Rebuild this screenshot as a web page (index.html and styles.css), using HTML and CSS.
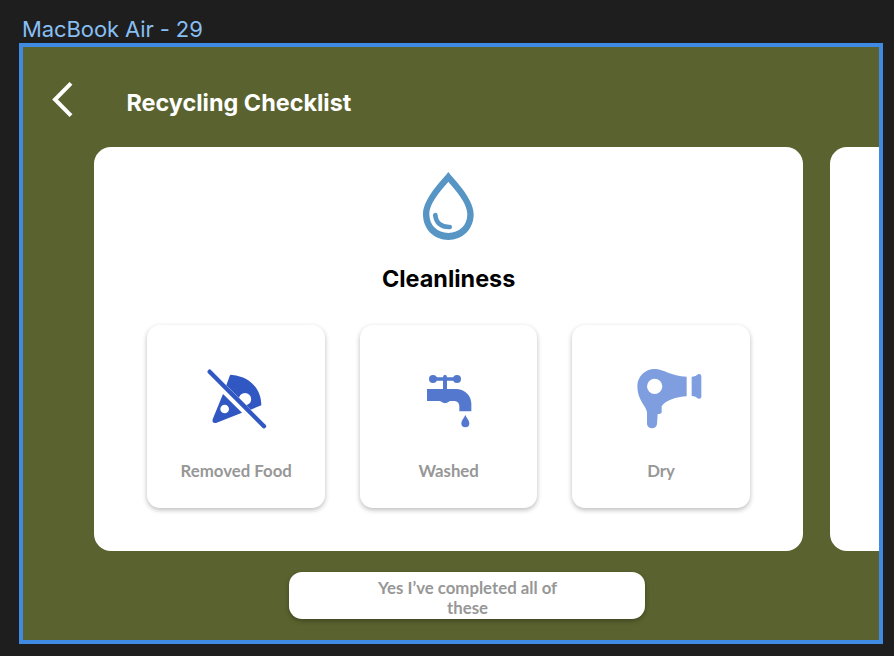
FILE: index.html
```html
<!DOCTYPE html>
<html lang="en">
<head>
<meta charset="utf-8">
<title>Recycling Checklist</title>
<link rel="stylesheet" href="styles.css">
</head>
<body>
<div class="frame-name">MacBook Air - 29</div>
<main class="frame">
  <header class="header">
    <svg class="back" width="24" height="40" viewBox="0 0 24 40"><path d="M20 3.3 4 19.5 20 35.7" fill="none" stroke="#fff" stroke-width="4"/></svg>
    <h1 class="title">Recycling Checklist</h1>
  </header>
  <div class="carousel">
    <section class="card">
      <svg class="drop" width="100" height="90" viewBox="0 0 300 270">
        <path fill="#5795c5" fill-rule="evenodd" d="M145 36C154 50 221 112 221 163C221 208 188 240 145 240S69 208 69 163C69 112 136 50 145 36ZM145 65C132 82 88 125 88 163C88 197 113 219 145 219S202 197 202 163C202 125 158 82 145 65Z"/>
        <path d="M106 165C107 188 124 202 149 201" fill="none" stroke="#5795c5" stroke-width="14" stroke-linecap="round"/>
      </svg>
      <h2 class="subject">Cleanliness</h2>
      <div class="tiles">
        <div class="tile">
          <svg width="90" height="85" viewBox="2 0 270 255">
            <g fill="#3157c3">
              <path fill-rule="evenodd" d="M108 91 118 63Q120 58 126 60C178 65 213 101 213 151L181 164ZM164 114A18.5 18.5 0 1 0 164 151A18.5 18.5 0 1 0 164 114Z"/>
              <path fill-rule="evenodd" d="M98 117 155 173 77 204Q64 206 67 193ZM103 149A13 13 0 1 0 103 175A13 13 0 1 0 103 149Z"/>
            </g>
            <path d="M58 50 221 214" stroke="#3157c3" stroke-width="13" stroke-linecap="round"/>
          </svg>
          <span>Removed Food</span>
        </div>
        <div class="tile">
          <svg width="90" height="85" viewBox="-19 -15 270 255">
            <g fill="#5378cd">
              <circle cx="68" cy="57" r="12"/><circle cx="140" cy="57" r="12"/>
              <path d="M68 52H98Q98 44 104 44T110 52H140V62H110V87H140C166 89 182 108 183 130V154H147V138Q146 125 133 123H119Q104 136 89 123H50V87H98V62H68Z"/>
              <path d="M165 165C169 174 177 182 177 190A12 12 0 0 1 153 190C153 182 161 174 165 165Z"/>
            </g>
          </svg>
          <span>Washed</span>
        </div>
        <div class="tile">
          <svg width="90" height="85" viewBox="-28 0 270 255">
            <g fill="#7f9ee0">
              <path fill-rule="evenodd" d="M88 42C116 42 136 64 184 65V124C154 125 119 137 109 154V171Q109 177 97 177L95 207C94 224 66 224 65 207V172C62 151 36 136 36 94C36 65 59 42 88 42ZM88 71A23 23 0 1 0 88 117A23 23 0 1 0 88 71Z"/>
              <path d="M199 65Q210 66 219 57Q228 56 228 64V125Q228 132 219 131Q210 122 199 123Z"/>
            </g>
          </svg>
          <span>Dry</span>
        </div>
      </div>
    </section>
    <section class="card"></section>
  </div>
  <button class="done"><span>Yes I’ve completed all of these</span></button>
</main>
</body>
</html>
```
FILE: styles.css
```css
* { box-sizing: border-box; }
body {
  margin: 0;
  height: 656px;
  overflow: hidden;
  background: #1e1e1e;
  font-family: Inter, sans-serif;
}
.frame-name {
  height: 42.5px;
  padding: 15px 0 0 22px;
  font-size: 22px;
  line-height: 28px;
  letter-spacing: -0.1px;
  color: #88bff2;
}
.frame {
  width: 863.5px;
  height: 601.5px;
  margin-left: 19px;
  border: 4px solid #3f8ae2;
  background: #5a632f;
  overflow: hidden;
}
.header {
  display: flex;
  height: 100.9px;
  padding: 33.5px 0 0 28px;
}
.title {
  margin: 8px 0 0 51.5px;
  font-size: 23.4px;
  line-height: 30px;
  font-weight: 700;
  color: #fff;
}
.carousel {
  display: flex;
  gap: 26.8px;
  padding-left: 71.4px;
}
.card {
  flex: none;
  width: 708.5px;
  height: 403.5px;
  padding: 12.6px 53px 0;
  border-radius: 17px;
  background: #fff;
}
.drop {
  display: block;
  margin-left: 252.6px;
}
.subject {
  margin: 14px 0 0;
  font-size: 23.4px;
  line-height: 30px;
  font-weight: 700;
  text-align: center;
  color: #000;
}
.tiles {
  display: flex;
  justify-content: space-between;
  margin-top: 31.5px;
}
.tile {
  display: flex;
  flex-direction: column;
  align-items: center;
  width: 177.7px;
  height: 182.5px;
  padding-top: 29.5px;
  border-radius: 13px;
  background: #fff;
  box-shadow: 0 2px 5px rgba(0, 0, 0, 0.27);
  font: 700 16.8px/20px Lato, sans-serif;
  color: #979797;
}
.tile span { margin-top: 20.6px; }
.done {
  display: block;
  width: 356px;
  height: 47px;
  margin: 21.2px 0 0 265.6px;
  padding: 4px 70px 0 72px;
  border: 0;
  border-radius: 13px;
  background: #fff;
  box-shadow: 0 2px 5px rgba(0, 0, 0, 0.3);
  font: 700 16.8px/20px Lato, sans-serif;
  color: #979797;
}
.done span { display: block; }
```
